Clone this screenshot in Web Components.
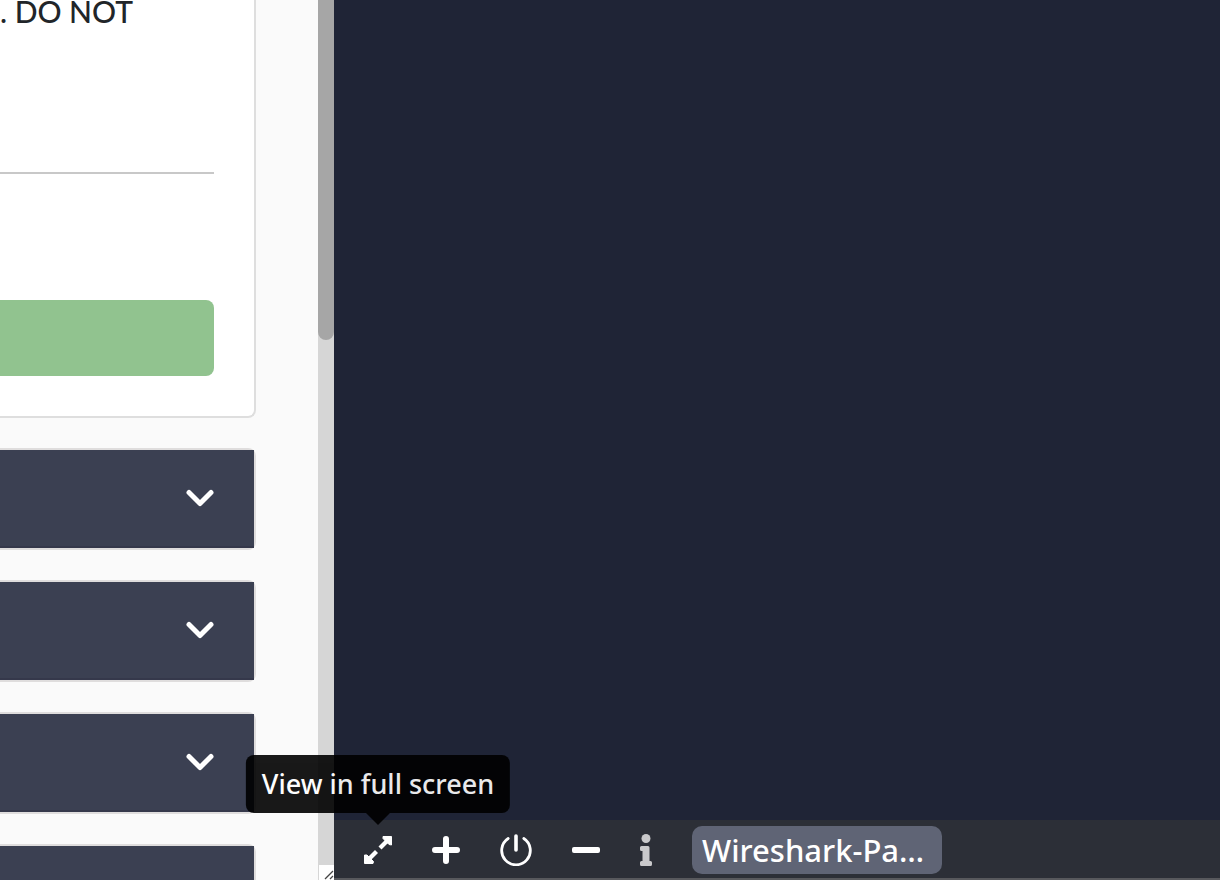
<!DOCTYPE html>
<html lang="en">
<head>
<meta charset="utf-8">
<title>Room</title>
<style>
html, body { margin: 0; height: 100%; overflow: hidden; }
body { font-family: "Noto Sans", "Open Sans", sans-serif; background: #1f2436; }
</style>
</head>
<body>
<room-layout>
  <task-panel slot="tasks">
    <task-card>
      <span slot="text">. DO NOT</span>
    </task-card>
    <task-header label="Task 2"></task-header>
    <task-header label="Task 3"></task-header>
    <task-header label="Task 4"></task-header>
    <task-header label="Task 5"></task-header>
  </task-panel>
  <machine-view slot="machine">
    <machine-toolbar>
      <tool-button kind="expand" label="Expand">
        <tool-tip>View in full screen</tool-tip>
      </tool-button>
      <tool-button kind="plus" label="Add time"></tool-button>
      <tool-button kind="power" label="Terminate"></tool-button>
      <tool-button kind="minus" label="Minimise"></tool-button>
      <tool-button kind="info" label="Information"></tool-button>
      <machine-name>Wireshark-Pa…</machine-name>
    </machine-toolbar>
  </machine-view>
</room-layout>

<script>
const define = (name, html, setup) => {
  customElements.define(name, class extends HTMLElement {
    constructor() {
      super();
      const t = document.createElement('template');
      t.innerHTML = html;
      this.attachShadow({ mode: 'open' }).append(t.content.cloneNode(true));
    }
    connectedCallback() { if (setup) setup(this, this.shadowRoot); }
  });
};

define('room-layout', `
<style>
:host { display: grid; grid-template-columns: 334px minmax(0, 1fr); height: 100vh; overflow: hidden; }
</style>
<slot name="tasks"></slot><slot name="machine"></slot>`);

define('task-panel', `
<style>
:host { display: grid; grid-template-columns: minmax(0, 1fr) 16px; background: #fafafa; height: 100vh; overflow: hidden; }
.list { display: flex; flex-direction: column; gap: 30px; padding-right: 62px; min-height: 0; overflow: hidden; }
.track { display: flex; flex-direction: column; justify-content: space-between; background: #d6d6d6; }
.thumb { height: 340px; background: #a6a6a6; border-radius: 0 0 8px 8px; }
.grip { height: 15px; margin-left: 1px; background: #fff; }
svg { display: block; }
</style>
<div class="list"><slot></slot></div>
<div class="track">
  <div class="thumb"></div>
  <div class="grip"><svg width="15" height="15" viewBox="0 0 15 15" fill="none" stroke="#444" stroke-width="1.3"><path d="M6 14 L14 6 M11 14 L14 11"/></svg></div>
</div>`);

define('task-card', `
<style>
:host { display: block; box-sizing: border-box; flex: none; background: #fff; border: solid #dedede; border-width: 0 2px 2px 0; border-radius: 0 0 8px 0; padding: 0 40px 40px 0; }
p { margin: 0 0 150px; font: 500 30px/22px Lato, sans-serif; color: #212529; white-space: nowrap; }
hr { margin: 0 0 126px; border: 0; height: 2px; background: #c8c8c8; }
button { display: block; width: 100%; height: 76px; border: 0; border-radius: 0 8px 8px 0; background: #91c38f; }
</style>
<p><slot name="text"></slot></p>
<hr>
<button type="button" aria-label="Completed"></button>`);

define('task-header', `
<style>
:host { display: block; flex: none; border: solid #dfdddd; border-width: 2px 2px 2px 0; border-radius: 0 8px 8px 0; }
button { display: flex; align-items: center; justify-content: flex-end; box-sizing: border-box; width: 100%; height: 98px; padding: 0 40px 0 0; border: 0; border-bottom: 2px solid #35384b; background: #3b4052; }
</style>
<button type="button"><svg width="28" height="18" viewBox="0 0 28 18" fill="none" stroke="#fff" stroke-width="5" stroke-linecap="round" stroke-linejoin="round"><path d="M3 3.5 L14 14.500 L25 3.5"/></svg></button>`,
(el, root) => root.querySelector('button').setAttribute('aria-label', el.getAttribute('label')));

define('machine-view', `
<style>
:host { display: flex; flex-direction: column; background: #1f2436; min-width: 0; }
main { flex: 1; }
</style>
<main></main><slot></slot>`);

define('machine-toolbar', `
<style>
:host { display: flex; align-items: center; gap: 40px; box-sizing: border-box; height: 60px; padding-left: 30px; background: #2c2f37; box-shadow: inset 0 -2px #58595d; }
</style>
<slot></slot>`);

const icons = {
  expand: [28, 28, '<path fill="#fff" stroke="#fff" stroke-width="1" stroke-linejoin="round" d="M19 .5h8.500v8.500l-2.500-.5-6-6zM.5 19v8.500h8.500l.5-2-6.500-6.500z"/><path fill="none" stroke="#fff" stroke-width="4.200" d="M24 4l-8 8" stroke-linecap="butt"/><path fill="none" stroke="#fff" stroke-width="4.200" d="M12.500 15.500L4 24"/>'],
  plus: [28, 28, '<path fill="none" stroke="#fff" stroke-width="6" stroke-linecap="round" d="M3 14h22M14 3v22"/>'],
  power: [32, 32, '<path fill="none" stroke="#fff" stroke-width="2.800" stroke-linecap="round" d="M8.200 4.500a14.300 14.300 0 1 0 15.600 0"/><path fill="none" stroke="#fff" stroke-width="3.600" stroke-linecap="round" d="M16 2v14"/>'],
  minus: [28, 28, '<rect y="11" width="28" height="6" rx="2" fill="#fff"/>'],
  info: [12, 32, '<g fill="#c9c9cb"><circle cx="6" cy="4.500" r="4.500"/><path d="M1.500 12H8a1.500 1.500 0 0 1 1.500 1.500V27h1A1.500 1.500 0 0 1 12 28.500v2a1.500 1.500 0 0 1-1.500 1.500h-9A1.500 1.500 0 0 1 0 30.500v-2A1.500 1.500 0 0 1 1.500 27h1V17h-1A1.500 1.500 0 0 1 0 15.500v-2A1.500 1.500 0 0 1 1.500 12z"/></g>']
};

define('tool-button', `
<style>
:host { display: block; position: relative; flex: none; }
button { display: block; padding: 0; border: 0; background: none; }
svg { display: block; }
</style>
<button type="button"></button><slot></slot>`,
(el, root) => {
  const [w, h, body] = icons[el.getAttribute('kind')];
  const b = root.querySelector('button');
  b.setAttribute('aria-label', el.getAttribute('label'));
  b.innerHTML = `<svg width="${w}" height="${h}" viewBox="0 0 ${w} ${h}">${body}</svg>`;
});

define('tool-tip', `
<style>
:host { display: block; position: absolute; left: 50%; bottom: 100%; margin-bottom: 11px; transform: translateX(-50%); opacity: .9; z-index: 2; }
div { padding: 0 16px; border-radius: 8px; background: #000; color: #fff; font: 500 27px/58px "Noto Sans", sans-serif; white-space: nowrap; }
i { display: block; width: 24px; height: 12px; margin: 0 auto; background: #000; clip-path: polygon(0 0, 100% 0, 50% 100%); }
</style>
<div><slot></slot></div><i></i>`);

define('machine-name', `
<style>
:host { display: block; flex: none; }
button { display: block; width: 250px; height: 48px; padding: 0 10px; border: 0; border-radius: 10px; background: #5f6475; color: #fff; font: 500 31px/48px "Noto Sans", sans-serif; text-align: left; white-space: nowrap; }
</style>
<button type="button"><slot></slot></button>`);
</script>
</body>
</html>
